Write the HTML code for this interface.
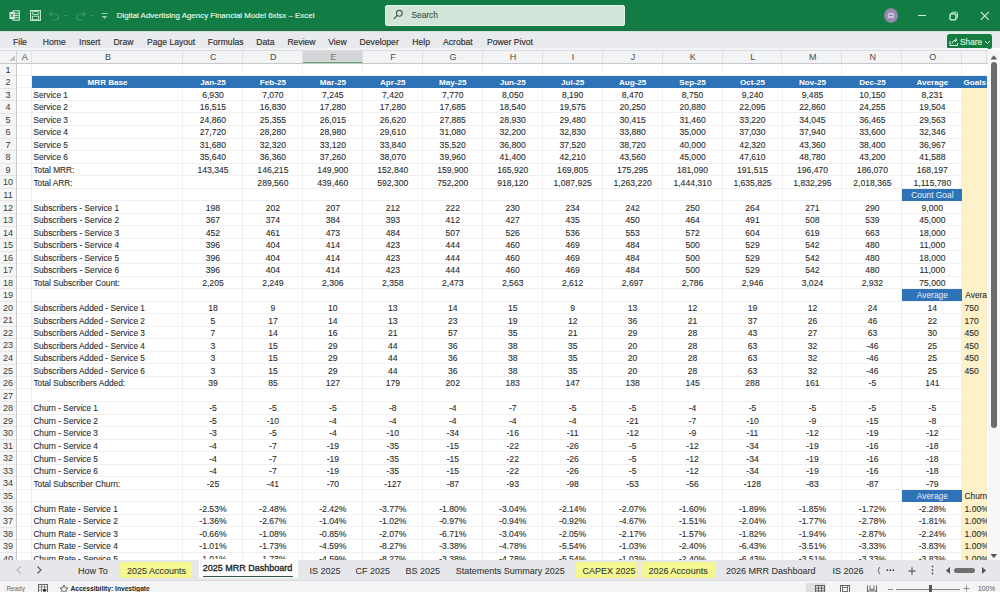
<!DOCTYPE html>
<html><head><meta charset="utf-8"><title>Excel</title>
<style>
*{margin:0;padding:0;box-sizing:border-box}
html,body{width:1000px;height:592px;overflow:hidden;background:#fff}
body{position:relative;font-family:"Liberation Sans",sans-serif;}
.a{position:absolute}
.t{position:absolute;white-space:nowrap;line-height:1}
svg{position:absolute;overflow:visible}
#colh{left:0;top:48px;width:987.5px;height:15.5px;background:#F2F3F4}
.ch{position:absolute;top:2.2px;height:13.2px;font-size:9px;color:#4a4a4a;text-align:center;line-height:14px;padding-left:1.6px;border-right:1px solid #E0E1E3}
#rowh{left:0;top:63.5px;width:16.5px;height:497px;background:#F6F6F7;border-right:1px solid #C9C9CB}
.rn{position:absolute;left:0;width:16px;text-align:center;font-size:9px;color:#3a3a3a;line-height:13.2px;border-bottom:1px solid #E6E6E8}
.gl{position:absolute;background:#F0F0F0}
.c{position:absolute;height:12.55px;line-height:15.5px;font-size:8.6px;color:#262626;-webkit-text-stroke:0.1px #444;white-space:nowrap;overflow:hidden}
.lb{font-size:8.3px;line-height:14.8px;letter-spacing:0}
.r{text-align:right;padding-right:4px}
.l{text-align:left;padding-left:1.2px}
.ctr{text-align:center}
.hb{color:#fff;-webkit-text-stroke:0;font-weight:bold;font-size:8.1px;line-height:14px}
.hn{color:#EAF1FA;-webkit-text-stroke:0;font-size:8.4px;line-height:14.6px}
#tabs{left:0;top:560.2px;width:1000px;height:20px;background:#E6E7EB}
#tabs .t{font-size:9px;color:#333}
#status{left:0;top:580.2px;width:1000px;height:11.8px;background:#F4F4F4;border-top:1px solid #DCDCDE}
</style></head><body>

<div class="a" style="left:0;top:0;width:1000px;height:31px;background:#127C45"></div>
<div class="a" style="left:0;top:27.5px;width:1000px;height:3.5px;background:#1A7344"></div>
<div class="a" style="left:0;top:30.5px;width:1000px;height:1px;background:#9FD4B2;opacity:.5"></div>
<svg style="left:9px;top:10px" width="11" height="11"><rect x="4" y="0.8" width="6.4" height="9.4" fill="#2E8A57" stroke="#CFEBD9" stroke-width="1"/><path d="M4.5 3.4 H10 M4.5 5.5 H10 M4.5 7.6 H10" stroke="#CFEBD9" stroke-width="0.9"/><rect x="0.5" y="2" width="5.2" height="7" fill="#E6F6EB"/><path d="M1.7 3.6 L4.5 7.4 M4.5 3.6 L1.7 7.4" stroke="#2C5E40" stroke-width="0.9"/></svg>
<svg style="left:30px;top:10px" width="11" height="11"><rect x="0.6" y="0.6" width="9.8" height="9.8" fill="none" stroke="#C9EAD4" stroke-width="1.1"/><rect x="2.8" y="1.6" width="5.4" height="2.8" fill="none" stroke="#C9EAD4" stroke-width="0.9"/><rect x="2.4" y="6.2" width="6.2" height="3.6" fill="none" stroke="#C9EAD4" stroke-width="0.9"/></svg>
<svg style="left:48px;top:10px" width="14" height="11"><path d="M2 4 H7.5 A3 3 0 0 1 7.5 10 H4" fill="none" stroke="#3C9664" stroke-width="1.1"/><path d="M4 1.5 L1.5 4 L4 6.5" fill="none" stroke="#3C9664" stroke-width="1.1"/></svg>
<div class="a" style="left:64px;top:15px;width:3px;height:1px;background:#3C9664"></div>
<svg style="left:75px;top:10px" width="14" height="11"><path d="M10 4 H4.5 A3 3 0 0 0 4.5 10 H8" fill="none" stroke="#3C9664" stroke-width="1.1"/><path d="M8 1.5 L10.5 4 L8 6.5" fill="none" stroke="#3C9664" stroke-width="1.1"/></svg>
<div class="a" style="left:91px;top:15px;width:3px;height:1px;background:#3C9664"></div>
<svg style="left:100px;top:11px" width="9" height="9"><path d="M1.5 2.5 H7.5" stroke="#8FCCA6" stroke-width="1"/><path d="M1.5 5 L4.5 8 L7.5 5Z" fill="#8FCCA6"/></svg>
<div class="t" style="left:116.80px;top:12.27px;font-size:7.95px;color:#E2F6E8;font-weight:normal;-webkit-text-stroke:0.2px #D0EEDA">Digital Advertising Agency Financial Model 6xlsx &ndash; Excel</div>
<div class="a" style="left:384.8px;top:5.2px;width:240px;height:20.4px;background:#D3E5D9;border:1px solid #E3F1E8;border-radius:2px"></div>
<svg style="left:392px;top:9px" width="12" height="12"><circle cx="7.3" cy="4.3" r="2.9" fill="none" stroke="#4A5E51" stroke-width="1.1"/><path d="M5.2 6.4 L1.8 10" stroke="#4A5E51" stroke-width="1.2"/></svg>
<div class="t" style="left:411.40px;top:11.29px;font-size:8.4px;color:#34513D;font-weight:normal;-webkit-text-stroke:0.1px #34513D">Search</div>
<div class="a" style="left:883.5px;top:7.8px;width:14.8px;height:14.8px;border-radius:50%;background:radial-gradient(circle,#A49BC0 0,#958CB0 50%,#6E7A74 85%,#4F7C62 100%)"></div>
<div class="a" style="left:887.6px;top:12.5px;width:6.5px;height:5.5px;background:#C9C2E2;border-radius:1px"></div>
<div class="a" style="left:889px;top:14.6px;width:4px;height:1.2px;background:#8A80A8"></div>
<div class="a" style="left:917.6px;top:14.8px;width:8.6px;height:1.1px;background:#D6F0DF"></div>
<svg style="left:949px;top:11px" width="10" height="10"><rect x="2.5" y="1.2" width="6" height="6" rx="1" fill="none" stroke="#BFE6CC" stroke-width="1"/><rect x="1" y="2.8" width="6" height="6" rx="1" fill="#127C45" stroke="#DDF3E4" stroke-width="1.3"/></svg>
<svg style="left:980px;top:10.5px" width="10" height="10"><path d="M0.8 0.8 L8.8 8.8 M8.8 0.8 L0.8 8.8" stroke="#D6F0DF" stroke-width="1.1"/></svg>
<div class="a" style="left:0;top:31.5px;width:1000px;height:16.5px;background:#E9EAEE"></div>
<div class="t" style="left:13.00px;top:38.02px;font-size:8.6px;color:#2e2e2e;font-weight:normal;-webkit-text-stroke:0.15px #333">File</div>
<div class="t" style="left:42.80px;top:38.02px;font-size:8.6px;color:#2e2e2e;font-weight:normal;-webkit-text-stroke:0.15px #333">Home</div>
<div class="t" style="left:79.00px;top:38.02px;font-size:8.6px;color:#2e2e2e;font-weight:normal;-webkit-text-stroke:0.15px #333">Insert</div>
<div class="t" style="left:113.40px;top:38.02px;font-size:8.6px;color:#2e2e2e;font-weight:normal;-webkit-text-stroke:0.15px #333">Draw</div>
<div class="t" style="left:147.00px;top:38.02px;font-size:8.6px;color:#2e2e2e;font-weight:normal;-webkit-text-stroke:0.15px #333">Page Layout</div>
<div class="t" style="left:207.80px;top:38.02px;font-size:8.6px;color:#2e2e2e;font-weight:normal;-webkit-text-stroke:0.15px #333">Formulas</div>
<div class="t" style="left:256.30px;top:38.02px;font-size:8.6px;color:#2e2e2e;font-weight:normal;-webkit-text-stroke:0.15px #333">Data</div>
<div class="t" style="left:287.40px;top:38.02px;font-size:8.6px;color:#2e2e2e;font-weight:normal;-webkit-text-stroke:0.15px #333">Review</div>
<div class="t" style="left:328.30px;top:38.02px;font-size:8.6px;color:#2e2e2e;font-weight:normal;-webkit-text-stroke:0.15px #333">View</div>
<div class="t" style="left:359.60px;top:38.02px;font-size:8.6px;color:#2e2e2e;font-weight:normal;-webkit-text-stroke:0.15px #333">Developer</div>
<div class="t" style="left:412.30px;top:38.02px;font-size:8.6px;color:#2e2e2e;font-weight:normal;-webkit-text-stroke:0.15px #333">Help</div>
<div class="t" style="left:443.00px;top:38.02px;font-size:8.6px;color:#2e2e2e;font-weight:normal;-webkit-text-stroke:0.15px #333">Acrobat</div>
<div class="t" style="left:487.00px;top:38.02px;font-size:8.6px;color:#2e2e2e;font-weight:normal;-webkit-text-stroke:0.15px #333">Power Pivot</div>
<div class="a" style="left:946.5px;top:33.6px;width:45.8px;height:15.1px;background:#157D42;border-radius:2.5px"></div>
<svg style="left:949px;top:37px" width="10" height="10"><path d="M1 4 V8.5 H8.5 V6" fill="none" stroke="#D9F2E1" stroke-width="1"/><path d="M3 6.5 Q3.5 3 7.5 3 M6 1.3 L8 3 L6 4.8" fill="none" stroke="#D9F2E1" stroke-width="1"/></svg>
<div class="t" style="left:960.00px;top:38.17px;font-size:8.3px;color:#D2F2DC;font-weight:normal;-webkit-text-stroke:0.2px #CFEFD9">Share</div>
<svg style="left:984px;top:39.5px" width="7" height="5"><path d="M1 1 L3.5 3.5 L6 1" fill="none" stroke="#D9F2E1" stroke-width="1"/></svg>
<div class="a" style="left:16.5px;top:63.5px;width:971px;height:497px;background:#fff"></div>
<div class="gl" style="left:16.5px;top:74.80px;width:971px;height:1px"></div>
<div class="gl" style="left:16.5px;top:87.34px;width:971px;height:1px"></div>
<div class="gl" style="left:16.5px;top:99.89px;width:971px;height:1px"></div>
<div class="gl" style="left:16.5px;top:112.43px;width:971px;height:1px"></div>
<div class="gl" style="left:16.5px;top:124.98px;width:971px;height:1px"></div>
<div class="gl" style="left:16.5px;top:137.52px;width:971px;height:1px"></div>
<div class="gl" style="left:16.5px;top:150.06px;width:971px;height:1px"></div>
<div class="gl" style="left:16.5px;top:162.61px;width:971px;height:1px"></div>
<div class="gl" style="left:16.5px;top:175.16px;width:971px;height:1px"></div>
<div class="gl" style="left:16.5px;top:187.70px;width:971px;height:1px"></div>
<div class="gl" style="left:16.5px;top:200.24px;width:971px;height:1px"></div>
<div class="gl" style="left:16.5px;top:212.79px;width:971px;height:1px"></div>
<div class="gl" style="left:16.5px;top:225.33px;width:971px;height:1px"></div>
<div class="gl" style="left:16.5px;top:237.88px;width:971px;height:1px"></div>
<div class="gl" style="left:16.5px;top:250.42px;width:971px;height:1px"></div>
<div class="gl" style="left:16.5px;top:262.97px;width:971px;height:1px"></div>
<div class="gl" style="left:16.5px;top:275.52px;width:971px;height:1px"></div>
<div class="gl" style="left:16.5px;top:288.06px;width:971px;height:1px"></div>
<div class="gl" style="left:16.5px;top:300.61px;width:971px;height:1px"></div>
<div class="gl" style="left:16.5px;top:313.15px;width:971px;height:1px"></div>
<div class="gl" style="left:16.5px;top:325.69px;width:971px;height:1px"></div>
<div class="gl" style="left:16.5px;top:338.24px;width:971px;height:1px"></div>
<div class="gl" style="left:16.5px;top:350.79px;width:971px;height:1px"></div>
<div class="gl" style="left:16.5px;top:363.33px;width:971px;height:1px"></div>
<div class="gl" style="left:16.5px;top:375.88px;width:971px;height:1px"></div>
<div class="gl" style="left:16.5px;top:388.42px;width:971px;height:1px"></div>
<div class="gl" style="left:16.5px;top:400.97px;width:971px;height:1px"></div>
<div class="gl" style="left:16.5px;top:413.51px;width:971px;height:1px"></div>
<div class="gl" style="left:16.5px;top:426.06px;width:971px;height:1px"></div>
<div class="gl" style="left:16.5px;top:438.60px;width:971px;height:1px"></div>
<div class="gl" style="left:16.5px;top:451.15px;width:971px;height:1px"></div>
<div class="gl" style="left:16.5px;top:463.69px;width:971px;height:1px"></div>
<div class="gl" style="left:16.5px;top:476.24px;width:971px;height:1px"></div>
<div class="gl" style="left:16.5px;top:488.78px;width:971px;height:1px"></div>
<div class="gl" style="left:16.5px;top:501.32px;width:971px;height:1px"></div>
<div class="gl" style="left:16.5px;top:513.87px;width:971px;height:1px"></div>
<div class="gl" style="left:16.5px;top:526.41px;width:971px;height:1px"></div>
<div class="gl" style="left:16.5px;top:538.96px;width:971px;height:1px"></div>
<div class="gl" style="left:16.5px;top:551.50px;width:971px;height:1px"></div>
<div class="gl" style="left:31.20px;top:63.5px;width:1px;height:497px"></div>
<div class="gl" style="left:182.00px;top:63.5px;width:1px;height:497px"></div>
<div class="gl" style="left:241.95px;top:63.5px;width:1px;height:497px"></div>
<div class="gl" style="left:301.90px;top:63.5px;width:1px;height:497px"></div>
<div class="gl" style="left:361.85px;top:63.5px;width:1px;height:497px"></div>
<div class="gl" style="left:421.80px;top:63.5px;width:1px;height:497px"></div>
<div class="gl" style="left:481.75px;top:63.5px;width:1px;height:497px"></div>
<div class="gl" style="left:541.70px;top:63.5px;width:1px;height:497px"></div>
<div class="gl" style="left:601.65px;top:63.5px;width:1px;height:497px"></div>
<div class="gl" style="left:661.60px;top:63.5px;width:1px;height:497px"></div>
<div class="gl" style="left:721.55px;top:63.5px;width:1px;height:497px"></div>
<div class="gl" style="left:781.50px;top:63.5px;width:1px;height:497px"></div>
<div class="gl" style="left:841.45px;top:63.5px;width:1px;height:497px"></div>
<div class="gl" style="left:901.40px;top:63.5px;width:1px;height:497px"></div>
<div class="gl" style="left:961.35px;top:63.5px;width:1px;height:497px"></div>
<div id="colh" class="a">
<div class="ch" style="left:16.50px;width:15.70px;">A</div>
<div class="ch" style="left:32.20px;width:150.80px;">B</div>
<div class="ch" style="left:183.00px;width:59.95px;">C</div>
<div class="ch" style="left:242.95px;width:59.95px;">D</div>
<div class="ch" style="left:302.90px;width:59.95px;background:#D4D5D6;border-bottom:1.8px solid #5DA677;color:#777;">E</div>
<div class="ch" style="left:362.85px;width:59.95px;">F</div>
<div class="ch" style="left:422.80px;width:59.95px;">G</div>
<div class="ch" style="left:482.75px;width:59.95px;">H</div>
<div class="ch" style="left:542.70px;width:59.95px;">I</div>
<div class="ch" style="left:602.65px;width:59.95px;">J</div>
<div class="ch" style="left:662.60px;width:59.95px;">K</div>
<div class="ch" style="left:722.55px;width:59.95px;">L</div>
<div class="ch" style="left:782.50px;width:59.95px;">M</div>
<div class="ch" style="left:842.45px;width:59.95px;">N</div>
<div class="ch" style="left:902.40px;width:59.95px;">O</div>
<div class="ch" style="left:962.35px;width:25.15px;"></div>
</div>
<svg style="left:7px;top:53px" width="9" height="9"><path d="M8 2 V8 H2Z" fill="#C4C5C7"/></svg>
<div class="a" style="left:16px;top:50px;width:1px;height:13.5px;background:#D0D1D3"></div>
<div class="a" style="left:0;top:62.9px;width:987.5px;height:0.7px;background:#C6C7C9"></div>
<div class="a" style="left:0;top:50.2px;width:987.5px;height:0.8px;background:#DCDDE0"></div>
<div id="rowh" class="a">
<div class="rn" style="top:0.00px;height:12.54px">1</div>
<div class="rn" style="top:12.54px;height:12.54px">2</div>
<div class="rn" style="top:25.09px;height:12.54px">3</div>
<div class="rn" style="top:37.63px;height:12.54px">4</div>
<div class="rn" style="top:50.18px;height:12.54px">5</div>
<div class="rn" style="top:62.73px;height:12.54px">6</div>
<div class="rn" style="top:75.27px;height:12.54px">7</div>
<div class="rn" style="top:87.81px;height:12.54px">8</div>
<div class="rn" style="top:100.36px;height:12.54px">9</div>
<div class="rn" style="top:112.91px;height:12.54px">10</div>
<div class="rn" style="top:125.45px;height:12.54px">11</div>
<div class="rn" style="top:138.00px;height:12.54px">12</div>
<div class="rn" style="top:150.54px;height:12.54px">13</div>
<div class="rn" style="top:163.09px;height:12.54px">14</div>
<div class="rn" style="top:175.63px;height:12.54px">15</div>
<div class="rn" style="top:188.18px;height:12.54px">16</div>
<div class="rn" style="top:200.72px;height:12.54px">17</div>
<div class="rn" style="top:213.26px;height:12.54px">18</div>
<div class="rn" style="top:225.81px;height:12.54px">19</div>
<div class="rn" style="top:238.35px;height:12.54px">20</div>
<div class="rn" style="top:250.90px;height:12.54px">21</div>
<div class="rn" style="top:263.44px;height:12.54px">22</div>
<div class="rn" style="top:275.99px;height:12.54px">23</div>
<div class="rn" style="top:288.54px;height:12.54px">24</div>
<div class="rn" style="top:301.08px;height:12.54px">25</div>
<div class="rn" style="top:313.62px;height:12.54px">26</div>
<div class="rn" style="top:326.17px;height:12.54px">27</div>
<div class="rn" style="top:338.71px;height:12.54px">28</div>
<div class="rn" style="top:351.26px;height:12.54px">29</div>
<div class="rn" style="top:363.81px;height:12.54px">30</div>
<div class="rn" style="top:376.35px;height:12.54px">31</div>
<div class="rn" style="top:388.89px;height:12.54px">32</div>
<div class="rn" style="top:401.44px;height:12.54px">33</div>
<div class="rn" style="top:413.99px;height:12.54px">34</div>
<div class="rn" style="top:426.53px;height:12.54px">35</div>
<div class="rn" style="top:439.07px;height:12.54px">36</div>
<div class="rn" style="top:451.62px;height:12.54px">37</div>
<div class="rn" style="top:464.17px;height:12.54px">38</div>
<div class="rn" style="top:476.71px;height:12.54px">39</div>
<div class="rn" style="top:489.25px;height:12.54px">40</div>
</div>
<div class="a" style="left:962.35px;top:88.34px;width:25.15px;height:471.86px;background:#FDF1CA"></div>
<div class="a" style="left:32.20px;top:75.80px;width:955.30px;height:11.95px;background:#2E72B8"></div>
<div class="c ctr hb" style="left:32.20px;top:76px;width:150.80px;">MRR Base</div>
<div class="c ctr hb" style="left:183.00px;top:76px;width:59.95px;">Jan-25</div>
<div class="c ctr hb" style="left:242.95px;top:76px;width:59.95px;">Feb-25</div>
<div class="c ctr hb" style="left:302.90px;top:76px;width:59.95px;">Mar-25</div>
<div class="c ctr hb" style="left:362.85px;top:76px;width:59.95px;">Apr-25</div>
<div class="c ctr hb" style="left:422.80px;top:76px;width:59.95px;">May-25</div>
<div class="c ctr hb" style="left:482.75px;top:76px;width:59.95px;">Jun-25</div>
<div class="c ctr hb" style="left:542.70px;top:76px;width:59.95px;">Jul-25</div>
<div class="c ctr hb" style="left:602.65px;top:76px;width:59.95px;">Aug-25</div>
<div class="c ctr hb" style="left:662.60px;top:76px;width:59.95px;">Sep-25</div>
<div class="c ctr hb" style="left:722.55px;top:76px;width:59.95px;">Oct-25</div>
<div class="c ctr hb" style="left:782.50px;top:76px;width:59.95px;">Nov-25</div>
<div class="c ctr hb" style="left:842.45px;top:76px;width:59.95px;">Dec-25</div>
<div class="c ctr hb" style="left:902.40px;top:76px;width:59.95px;">Average</div>
<div class="c l hb" style="left:962.35px;top:76px;width:25.15px;overflow:hidden">Goals</div>
<div class="c l lb" style="left:32.20px;top:88px;width:150.80px;">Service 1</div>
<div class="c ctr" style="left:183.00px;top:88px;width:59.95px;">6,930</div>
<div class="c ctr" style="left:242.95px;top:88px;width:59.95px;">7,070</div>
<div class="c ctr" style="left:302.90px;top:88px;width:59.95px;">7,245</div>
<div class="c ctr" style="left:362.85px;top:88px;width:59.95px;">7,420</div>
<div class="c ctr" style="left:422.80px;top:88px;width:59.95px;">7,770</div>
<div class="c ctr" style="left:482.75px;top:88px;width:59.95px;">8,050</div>
<div class="c ctr" style="left:542.70px;top:88px;width:59.95px;">8,190</div>
<div class="c ctr" style="left:602.65px;top:88px;width:59.95px;">8,470</div>
<div class="c ctr" style="left:662.60px;top:88px;width:59.95px;">8,750</div>
<div class="c ctr" style="left:722.55px;top:88px;width:59.95px;">9,240</div>
<div class="c ctr" style="left:782.50px;top:88px;width:59.95px;">9,485</div>
<div class="c ctr" style="left:842.45px;top:88px;width:59.95px;">10,150</div>
<div class="c ctr" style="left:902.40px;top:88px;width:59.95px;">8,231</div>
<div class="c l lb" style="left:32.20px;top:100px;width:150.80px;">Service 2</div>
<div class="c ctr" style="left:183.00px;top:100px;width:59.95px;">16,515</div>
<div class="c ctr" style="left:242.95px;top:100px;width:59.95px;">16,830</div>
<div class="c ctr" style="left:302.90px;top:100px;width:59.95px;">17,280</div>
<div class="c ctr" style="left:362.85px;top:100px;width:59.95px;">17,280</div>
<div class="c ctr" style="left:422.80px;top:100px;width:59.95px;">17,685</div>
<div class="c ctr" style="left:482.75px;top:100px;width:59.95px;">18,540</div>
<div class="c ctr" style="left:542.70px;top:100px;width:59.95px;">19,575</div>
<div class="c ctr" style="left:602.65px;top:100px;width:59.95px;">20,250</div>
<div class="c ctr" style="left:662.60px;top:100px;width:59.95px;">20,880</div>
<div class="c ctr" style="left:722.55px;top:100px;width:59.95px;">22,095</div>
<div class="c ctr" style="left:782.50px;top:100px;width:59.95px;">22,860</div>
<div class="c ctr" style="left:842.45px;top:100px;width:59.95px;">24,255</div>
<div class="c ctr" style="left:902.40px;top:100px;width:59.95px;">19,504</div>
<div class="c l lb" style="left:32.20px;top:113px;width:150.80px;">Service 3</div>
<div class="c ctr" style="left:183.00px;top:113px;width:59.95px;">24,860</div>
<div class="c ctr" style="left:242.95px;top:113px;width:59.95px;">25,355</div>
<div class="c ctr" style="left:302.90px;top:113px;width:59.95px;">26,015</div>
<div class="c ctr" style="left:362.85px;top:113px;width:59.95px;">26,620</div>
<div class="c ctr" style="left:422.80px;top:113px;width:59.95px;">27,885</div>
<div class="c ctr" style="left:482.75px;top:113px;width:59.95px;">28,930</div>
<div class="c ctr" style="left:542.70px;top:113px;width:59.95px;">29,480</div>
<div class="c ctr" style="left:602.65px;top:113px;width:59.95px;">30,415</div>
<div class="c ctr" style="left:662.60px;top:113px;width:59.95px;">31,460</div>
<div class="c ctr" style="left:722.55px;top:113px;width:59.95px;">33,220</div>
<div class="c ctr" style="left:782.50px;top:113px;width:59.95px;">34,045</div>
<div class="c ctr" style="left:842.45px;top:113px;width:59.95px;">36,465</div>
<div class="c ctr" style="left:902.40px;top:113px;width:59.95px;">29,563</div>
<div class="c l lb" style="left:32.20px;top:125px;width:150.80px;">Service 4</div>
<div class="c ctr" style="left:183.00px;top:125px;width:59.95px;">27,720</div>
<div class="c ctr" style="left:242.95px;top:125px;width:59.95px;">28,280</div>
<div class="c ctr" style="left:302.90px;top:125px;width:59.95px;">28,980</div>
<div class="c ctr" style="left:362.85px;top:125px;width:59.95px;">29,610</div>
<div class="c ctr" style="left:422.80px;top:125px;width:59.95px;">31,080</div>
<div class="c ctr" style="left:482.75px;top:125px;width:59.95px;">32,200</div>
<div class="c ctr" style="left:542.70px;top:125px;width:59.95px;">32,830</div>
<div class="c ctr" style="left:602.65px;top:125px;width:59.95px;">33,880</div>
<div class="c ctr" style="left:662.60px;top:125px;width:59.95px;">35,000</div>
<div class="c ctr" style="left:722.55px;top:125px;width:59.95px;">37,030</div>
<div class="c ctr" style="left:782.50px;top:125px;width:59.95px;">37,940</div>
<div class="c ctr" style="left:842.45px;top:125px;width:59.95px;">33,600</div>
<div class="c ctr" style="left:902.40px;top:125px;width:59.95px;">32,346</div>
<div class="c l lb" style="left:32.20px;top:138px;width:150.80px;">Service 5</div>
<div class="c ctr" style="left:183.00px;top:138px;width:59.95px;">31,680</div>
<div class="c ctr" style="left:242.95px;top:138px;width:59.95px;">32,320</div>
<div class="c ctr" style="left:302.90px;top:138px;width:59.95px;">33,120</div>
<div class="c ctr" style="left:362.85px;top:138px;width:59.95px;">33,840</div>
<div class="c ctr" style="left:422.80px;top:138px;width:59.95px;">35,520</div>
<div class="c ctr" style="left:482.75px;top:138px;width:59.95px;">36,800</div>
<div class="c ctr" style="left:542.70px;top:138px;width:59.95px;">37,520</div>
<div class="c ctr" style="left:602.65px;top:138px;width:59.95px;">38,720</div>
<div class="c ctr" style="left:662.60px;top:138px;width:59.95px;">40,000</div>
<div class="c ctr" style="left:722.55px;top:138px;width:59.95px;">42,320</div>
<div class="c ctr" style="left:782.50px;top:138px;width:59.95px;">43,360</div>
<div class="c ctr" style="left:842.45px;top:138px;width:59.95px;">38,400</div>
<div class="c ctr" style="left:902.40px;top:138px;width:59.95px;">36,967</div>
<div class="c l lb" style="left:32.20px;top:150px;width:150.80px;">Service 6</div>
<div class="c ctr" style="left:183.00px;top:150px;width:59.95px;">35,640</div>
<div class="c ctr" style="left:242.95px;top:150px;width:59.95px;">36,360</div>
<div class="c ctr" style="left:302.90px;top:150px;width:59.95px;">37,260</div>
<div class="c ctr" style="left:362.85px;top:150px;width:59.95px;">38,070</div>
<div class="c ctr" style="left:422.80px;top:150px;width:59.95px;">39,960</div>
<div class="c ctr" style="left:482.75px;top:150px;width:59.95px;">41,400</div>
<div class="c ctr" style="left:542.70px;top:150px;width:59.95px;">42,210</div>
<div class="c ctr" style="left:602.65px;top:150px;width:59.95px;">43,560</div>
<div class="c ctr" style="left:662.60px;top:150px;width:59.95px;">45,000</div>
<div class="c ctr" style="left:722.55px;top:150px;width:59.95px;">47,610</div>
<div class="c ctr" style="left:782.50px;top:150px;width:59.95px;">48,780</div>
<div class="c ctr" style="left:842.45px;top:150px;width:59.95px;">43,200</div>
<div class="c ctr" style="left:902.40px;top:150px;width:59.95px;">41,588</div>
<div class="c l lb" style="left:32.20px;top:163px;width:150.80px;">Total MRR:</div>
<div class="c ctr" style="left:183.00px;top:163px;width:59.95px;">143,345</div>
<div class="c ctr" style="left:242.95px;top:163px;width:59.95px;">146,215</div>
<div class="c ctr" style="left:302.90px;top:163px;width:59.95px;">149,900</div>
<div class="c ctr" style="left:362.85px;top:163px;width:59.95px;">152,840</div>
<div class="c ctr" style="left:422.80px;top:163px;width:59.95px;">159,900</div>
<div class="c ctr" style="left:482.75px;top:163px;width:59.95px;">165,920</div>
<div class="c ctr" style="left:542.70px;top:163px;width:59.95px;">169,805</div>
<div class="c ctr" style="left:602.65px;top:163px;width:59.95px;">175,295</div>
<div class="c ctr" style="left:662.60px;top:163px;width:59.95px;">181,090</div>
<div class="c ctr" style="left:722.55px;top:163px;width:59.95px;">191,515</div>
<div class="c ctr" style="left:782.50px;top:163px;width:59.95px;">196,470</div>
<div class="c ctr" style="left:842.45px;top:163px;width:59.95px;">186,070</div>
<div class="c ctr" style="left:902.40px;top:163px;width:59.95px;">168,197</div>
<div class="c l lb" style="left:32.20px;top:176px;width:150.80px;">Total ARR:</div>
<div class="c ctr" style="left:242.95px;top:176px;width:59.95px;">289,560</div>
<div class="c ctr" style="left:302.90px;top:176px;width:59.95px;">439,460</div>
<div class="c ctr" style="left:362.85px;top:176px;width:59.95px;">592,300</div>
<div class="c ctr" style="left:422.80px;top:176px;width:59.95px;">752,200</div>
<div class="c ctr" style="left:482.75px;top:176px;width:59.95px;">918,120</div>
<div class="c ctr" style="left:542.70px;top:176px;width:59.95px;">1,087,925</div>
<div class="c ctr" style="left:602.65px;top:176px;width:59.95px;">1,263,220</div>
<div class="c ctr" style="left:662.60px;top:176px;width:59.95px;">1,444,310</div>
<div class="c ctr" style="left:722.55px;top:176px;width:59.95px;">1,635,825</div>
<div class="c ctr" style="left:782.50px;top:176px;width:59.95px;">1,832,295</div>
<div class="c ctr" style="left:842.45px;top:176px;width:59.95px;">2,018,365</div>
<div class="c ctr" style="left:902.40px;top:176px;width:59.95px;">1,115,780</div>
<div class="c l lb" style="left:32.20px;top:201px;width:150.80px;">Subscribers - Service 1</div>
<div class="c ctr" style="left:183.00px;top:201px;width:59.95px;">198</div>
<div class="c ctr" style="left:242.95px;top:201px;width:59.95px;">202</div>
<div class="c ctr" style="left:302.90px;top:201px;width:59.95px;">207</div>
<div class="c ctr" style="left:362.85px;top:201px;width:59.95px;">212</div>
<div class="c ctr" style="left:422.80px;top:201px;width:59.95px;">222</div>
<div class="c ctr" style="left:482.75px;top:201px;width:59.95px;">230</div>
<div class="c ctr" style="left:542.70px;top:201px;width:59.95px;">234</div>
<div class="c ctr" style="left:602.65px;top:201px;width:59.95px;">242</div>
<div class="c ctr" style="left:662.60px;top:201px;width:59.95px;">250</div>
<div class="c ctr" style="left:722.55px;top:201px;width:59.95px;">264</div>
<div class="c ctr" style="left:782.50px;top:201px;width:59.95px;">271</div>
<div class="c ctr" style="left:842.45px;top:201px;width:59.95px;">290</div>
<div class="c ctr" style="left:902.40px;top:201px;width:59.95px;">9,000</div>
<div class="c l lb" style="left:32.20px;top:213px;width:150.80px;">Subscribers - Service 2</div>
<div class="c ctr" style="left:183.00px;top:213px;width:59.95px;">367</div>
<div class="c ctr" style="left:242.95px;top:213px;width:59.95px;">374</div>
<div class="c ctr" style="left:302.90px;top:213px;width:59.95px;">384</div>
<div class="c ctr" style="left:362.85px;top:213px;width:59.95px;">393</div>
<div class="c ctr" style="left:422.80px;top:213px;width:59.95px;">412</div>
<div class="c ctr" style="left:482.75px;top:213px;width:59.95px;">427</div>
<div class="c ctr" style="left:542.70px;top:213px;width:59.95px;">435</div>
<div class="c ctr" style="left:602.65px;top:213px;width:59.95px;">450</div>
<div class="c ctr" style="left:662.60px;top:213px;width:59.95px;">464</div>
<div class="c ctr" style="left:722.55px;top:213px;width:59.95px;">491</div>
<div class="c ctr" style="left:782.50px;top:213px;width:59.95px;">508</div>
<div class="c ctr" style="left:842.45px;top:213px;width:59.95px;">539</div>
<div class="c ctr" style="left:902.40px;top:213px;width:59.95px;">45,000</div>
<div class="c l lb" style="left:32.20px;top:226px;width:150.80px;">Subscribers - Service 3</div>
<div class="c ctr" style="left:183.00px;top:226px;width:59.95px;">452</div>
<div class="c ctr" style="left:242.95px;top:226px;width:59.95px;">461</div>
<div class="c ctr" style="left:302.90px;top:226px;width:59.95px;">473</div>
<div class="c ctr" style="left:362.85px;top:226px;width:59.95px;">484</div>
<div class="c ctr" style="left:422.80px;top:226px;width:59.95px;">507</div>
<div class="c ctr" style="left:482.75px;top:226px;width:59.95px;">526</div>
<div class="c ctr" style="left:542.70px;top:226px;width:59.95px;">536</div>
<div class="c ctr" style="left:602.65px;top:226px;width:59.95px;">553</div>
<div class="c ctr" style="left:662.60px;top:226px;width:59.95px;">572</div>
<div class="c ctr" style="left:722.55px;top:226px;width:59.95px;">604</div>
<div class="c ctr" style="left:782.50px;top:226px;width:59.95px;">619</div>
<div class="c ctr" style="left:842.45px;top:226px;width:59.95px;">663</div>
<div class="c ctr" style="left:902.40px;top:226px;width:59.95px;">18,000</div>
<div class="c l lb" style="left:32.20px;top:238px;width:150.80px;">Subscribers - Service 4</div>
<div class="c ctr" style="left:183.00px;top:238px;width:59.95px;">396</div>
<div class="c ctr" style="left:242.95px;top:238px;width:59.95px;">404</div>
<div class="c ctr" style="left:302.90px;top:238px;width:59.95px;">414</div>
<div class="c ctr" style="left:362.85px;top:238px;width:59.95px;">423</div>
<div class="c ctr" style="left:422.80px;top:238px;width:59.95px;">444</div>
<div class="c ctr" style="left:482.75px;top:238px;width:59.95px;">460</div>
<div class="c ctr" style="left:542.70px;top:238px;width:59.95px;">469</div>
<div class="c ctr" style="left:602.65px;top:238px;width:59.95px;">484</div>
<div class="c ctr" style="left:662.60px;top:238px;width:59.95px;">500</div>
<div class="c ctr" style="left:722.55px;top:238px;width:59.95px;">529</div>
<div class="c ctr" style="left:782.50px;top:238px;width:59.95px;">542</div>
<div class="c ctr" style="left:842.45px;top:238px;width:59.95px;">480</div>
<div class="c ctr" style="left:902.40px;top:238px;width:59.95px;">11,000</div>
<div class="c l lb" style="left:32.20px;top:251px;width:150.80px;">Subscribers - Service 5</div>
<div class="c ctr" style="left:183.00px;top:251px;width:59.95px;">396</div>
<div class="c ctr" style="left:242.95px;top:251px;width:59.95px;">404</div>
<div class="c ctr" style="left:302.90px;top:251px;width:59.95px;">414</div>
<div class="c ctr" style="left:362.85px;top:251px;width:59.95px;">423</div>
<div class="c ctr" style="left:422.80px;top:251px;width:59.95px;">444</div>
<div class="c ctr" style="left:482.75px;top:251px;width:59.95px;">460</div>
<div class="c ctr" style="left:542.70px;top:251px;width:59.95px;">469</div>
<div class="c ctr" style="left:602.65px;top:251px;width:59.95px;">484</div>
<div class="c ctr" style="left:662.60px;top:251px;width:59.95px;">500</div>
<div class="c ctr" style="left:722.55px;top:251px;width:59.95px;">529</div>
<div class="c ctr" style="left:782.50px;top:251px;width:59.95px;">542</div>
<div class="c ctr" style="left:842.45px;top:251px;width:59.95px;">480</div>
<div class="c ctr" style="left:902.40px;top:251px;width:59.95px;">18,000</div>
<div class="c l lb" style="left:32.20px;top:263px;width:150.80px;">Subscribers - Service 6</div>
<div class="c ctr" style="left:183.00px;top:263px;width:59.95px;">396</div>
<div class="c ctr" style="left:242.95px;top:263px;width:59.95px;">404</div>
<div class="c ctr" style="left:302.90px;top:263px;width:59.95px;">414</div>
<div class="c ctr" style="left:362.85px;top:263px;width:59.95px;">423</div>
<div class="c ctr" style="left:422.80px;top:263px;width:59.95px;">444</div>
<div class="c ctr" style="left:482.75px;top:263px;width:59.95px;">460</div>
<div class="c ctr" style="left:542.70px;top:263px;width:59.95px;">469</div>
<div class="c ctr" style="left:602.65px;top:263px;width:59.95px;">484</div>
<div class="c ctr" style="left:662.60px;top:263px;width:59.95px;">500</div>
<div class="c ctr" style="left:722.55px;top:263px;width:59.95px;">529</div>
<div class="c ctr" style="left:782.50px;top:263px;width:59.95px;">542</div>
<div class="c ctr" style="left:842.45px;top:263px;width:59.95px;">480</div>
<div class="c ctr" style="left:902.40px;top:263px;width:59.95px;">11,000</div>
<div class="c l lb" style="left:32.20px;top:276px;width:150.80px;">Total Subscriber Count:</div>
<div class="c ctr" style="left:183.00px;top:276px;width:59.95px;">2,205</div>
<div class="c ctr" style="left:242.95px;top:276px;width:59.95px;">2,249</div>
<div class="c ctr" style="left:302.90px;top:276px;width:59.95px;">2,306</div>
<div class="c ctr" style="left:362.85px;top:276px;width:59.95px;">2,358</div>
<div class="c ctr" style="left:422.80px;top:276px;width:59.95px;">2,473</div>
<div class="c ctr" style="left:482.75px;top:276px;width:59.95px;">2,563</div>
<div class="c ctr" style="left:542.70px;top:276px;width:59.95px;">2,612</div>
<div class="c ctr" style="left:602.65px;top:276px;width:59.95px;">2,697</div>
<div class="c ctr" style="left:662.60px;top:276px;width:59.95px;">2,786</div>
<div class="c ctr" style="left:722.55px;top:276px;width:59.95px;">2,946</div>
<div class="c ctr" style="left:782.50px;top:276px;width:59.95px;">3,024</div>
<div class="c ctr" style="left:842.45px;top:276px;width:59.95px;">2,932</div>
<div class="c ctr" style="left:902.40px;top:276px;width:59.95px;">75,000</div>
<div class="c l lb" style="left:32.20px;top:301px;width:150.80px;">Subscribers Added - Service 1</div>
<div class="c ctr" style="left:183.00px;top:301px;width:59.95px;">18</div>
<div class="c ctr" style="left:242.95px;top:301px;width:59.95px;">9</div>
<div class="c ctr" style="left:302.90px;top:301px;width:59.95px;">10</div>
<div class="c ctr" style="left:362.85px;top:301px;width:59.95px;">13</div>
<div class="c ctr" style="left:422.80px;top:301px;width:59.95px;">14</div>
<div class="c ctr" style="left:482.75px;top:301px;width:59.95px;">15</div>
<div class="c ctr" style="left:542.70px;top:301px;width:59.95px;">9</div>
<div class="c ctr" style="left:602.65px;top:301px;width:59.95px;">13</div>
<div class="c ctr" style="left:662.60px;top:301px;width:59.95px;">12</div>
<div class="c ctr" style="left:722.55px;top:301px;width:59.95px;">19</div>
<div class="c ctr" style="left:782.50px;top:301px;width:59.95px;">12</div>
<div class="c ctr" style="left:842.45px;top:301px;width:59.95px;">24</div>
<div class="c ctr" style="left:902.40px;top:301px;width:59.95px;">14</div>
<div class="c l" style="left:962.35px;top:301px;width:25.15px;padding-left:2.2px">750</div>
<div class="c l lb" style="left:32.20px;top:314px;width:150.80px;">Subscribers Added - Service 2</div>
<div class="c ctr" style="left:183.00px;top:314px;width:59.95px;">5</div>
<div class="c ctr" style="left:242.95px;top:314px;width:59.95px;">17</div>
<div class="c ctr" style="left:302.90px;top:314px;width:59.95px;">14</div>
<div class="c ctr" style="left:362.85px;top:314px;width:59.95px;">13</div>
<div class="c ctr" style="left:422.80px;top:314px;width:59.95px;">23</div>
<div class="c ctr" style="left:482.75px;top:314px;width:59.95px;">19</div>
<div class="c ctr" style="left:542.70px;top:314px;width:59.95px;">12</div>
<div class="c ctr" style="left:602.65px;top:314px;width:59.95px;">36</div>
<div class="c ctr" style="left:662.60px;top:314px;width:59.95px;">21</div>
<div class="c ctr" style="left:722.55px;top:314px;width:59.95px;">37</div>
<div class="c ctr" style="left:782.50px;top:314px;width:59.95px;">26</div>
<div class="c ctr" style="left:842.45px;top:314px;width:59.95px;">46</div>
<div class="c ctr" style="left:902.40px;top:314px;width:59.95px;">22</div>
<div class="c l" style="left:962.35px;top:314px;width:25.15px;padding-left:2.2px">170</div>
<div class="c l lb" style="left:32.20px;top:326px;width:150.80px;">Subscribers Added - Service 3</div>
<div class="c ctr" style="left:183.00px;top:326px;width:59.95px;">7</div>
<div class="c ctr" style="left:242.95px;top:326px;width:59.95px;">14</div>
<div class="c ctr" style="left:302.90px;top:326px;width:59.95px;">16</div>
<div class="c ctr" style="left:362.85px;top:326px;width:59.95px;">21</div>
<div class="c ctr" style="left:422.80px;top:326px;width:59.95px;">57</div>
<div class="c ctr" style="left:482.75px;top:326px;width:59.95px;">35</div>
<div class="c ctr" style="left:542.70px;top:326px;width:59.95px;">21</div>
<div class="c ctr" style="left:602.65px;top:326px;width:59.95px;">29</div>
<div class="c ctr" style="left:662.60px;top:326px;width:59.95px;">28</div>
<div class="c ctr" style="left:722.55px;top:326px;width:59.95px;">43</div>
<div class="c ctr" style="left:782.50px;top:326px;width:59.95px;">27</div>
<div class="c ctr" style="left:842.45px;top:326px;width:59.95px;">63</div>
<div class="c ctr" style="left:902.40px;top:326px;width:59.95px;">30</div>
<div class="c l" style="left:962.35px;top:326px;width:25.15px;padding-left:2.2px">450</div>
<div class="c l lb" style="left:32.20px;top:339px;width:150.80px;">Subscribers Added - Service 4</div>
<div class="c ctr" style="left:183.00px;top:339px;width:59.95px;">3</div>
<div class="c ctr" style="left:242.95px;top:339px;width:59.95px;">15</div>
<div class="c ctr" style="left:302.90px;top:339px;width:59.95px;">29</div>
<div class="c ctr" style="left:362.85px;top:339px;width:59.95px;">44</div>
<div class="c ctr" style="left:422.80px;top:339px;width:59.95px;">36</div>
<div class="c ctr" style="left:482.75px;top:339px;width:59.95px;">38</div>
<div class="c ctr" style="left:542.70px;top:339px;width:59.95px;">35</div>
<div class="c ctr" style="left:602.65px;top:339px;width:59.95px;">20</div>
<div class="c ctr" style="left:662.60px;top:339px;width:59.95px;">28</div>
<div class="c ctr" style="left:722.55px;top:339px;width:59.95px;">63</div>
<div class="c ctr" style="left:782.50px;top:339px;width:59.95px;">32</div>
<div class="c ctr" style="left:842.45px;top:339px;width:59.95px;">-46</div>
<div class="c ctr" style="left:902.40px;top:339px;width:59.95px;">25</div>
<div class="c l" style="left:962.35px;top:339px;width:25.15px;padding-left:2.2px">450</div>
<div class="c l lb" style="left:32.20px;top:351px;width:150.80px;">Subscribers Added - Service 5</div>
<div class="c ctr" style="left:183.00px;top:351px;width:59.95px;">3</div>
<div class="c ctr" style="left:242.95px;top:351px;width:59.95px;">15</div>
<div class="c ctr" style="left:302.90px;top:351px;width:59.95px;">29</div>
<div class="c ctr" style="left:362.85px;top:351px;width:59.95px;">44</div>
<div class="c ctr" style="left:422.80px;top:351px;width:59.95px;">36</div>
<div class="c ctr" style="left:482.75px;top:351px;width:59.95px;">38</div>
<div class="c ctr" style="left:542.70px;top:351px;width:59.95px;">35</div>
<div class="c ctr" style="left:602.65px;top:351px;width:59.95px;">20</div>
<div class="c ctr" style="left:662.60px;top:351px;width:59.95px;">28</div>
<div class="c ctr" style="left:722.55px;top:351px;width:59.95px;">63</div>
<div class="c ctr" style="left:782.50px;top:351px;width:59.95px;">32</div>
<div class="c ctr" style="left:842.45px;top:351px;width:59.95px;">-46</div>
<div class="c ctr" style="left:902.40px;top:351px;width:59.95px;">25</div>
<div class="c l" style="left:962.35px;top:351px;width:25.15px;padding-left:2.2px">450</div>
<div class="c l lb" style="left:32.20px;top:364px;width:150.80px;">Subscribers Added - Service 6</div>
<div class="c ctr" style="left:183.00px;top:364px;width:59.95px;">3</div>
<div class="c ctr" style="left:242.95px;top:364px;width:59.95px;">15</div>
<div class="c ctr" style="left:302.90px;top:364px;width:59.95px;">29</div>
<div class="c ctr" style="left:362.85px;top:364px;width:59.95px;">44</div>
<div class="c ctr" style="left:422.80px;top:364px;width:59.95px;">36</div>
<div class="c ctr" style="left:482.75px;top:364px;width:59.95px;">38</div>
<div class="c ctr" style="left:542.70px;top:364px;width:59.95px;">35</div>
<div class="c ctr" style="left:602.65px;top:364px;width:59.95px;">20</div>
<div class="c ctr" style="left:662.60px;top:364px;width:59.95px;">28</div>
<div class="c ctr" style="left:722.55px;top:364px;width:59.95px;">63</div>
<div class="c ctr" style="left:782.50px;top:364px;width:59.95px;">32</div>
<div class="c ctr" style="left:842.45px;top:364px;width:59.95px;">-46</div>
<div class="c ctr" style="left:902.40px;top:364px;width:59.95px;">25</div>
<div class="c l" style="left:962.35px;top:364px;width:25.15px;padding-left:2.2px">450</div>
<div class="c l lb" style="left:32.20px;top:376px;width:150.80px;">Total Subscribers Added:</div>
<div class="c ctr" style="left:183.00px;top:376px;width:59.95px;">39</div>
<div class="c ctr" style="left:242.95px;top:376px;width:59.95px;">85</div>
<div class="c ctr" style="left:302.90px;top:376px;width:59.95px;">127</div>
<div class="c ctr" style="left:362.85px;top:376px;width:59.95px;">179</div>
<div class="c ctr" style="left:422.80px;top:376px;width:59.95px;">202</div>
<div class="c ctr" style="left:482.75px;top:376px;width:59.95px;">183</div>
<div class="c ctr" style="left:542.70px;top:376px;width:59.95px;">147</div>
<div class="c ctr" style="left:602.65px;top:376px;width:59.95px;">138</div>
<div class="c ctr" style="left:662.60px;top:376px;width:59.95px;">145</div>
<div class="c ctr" style="left:722.55px;top:376px;width:59.95px;">288</div>
<div class="c ctr" style="left:782.50px;top:376px;width:59.95px;">161</div>
<div class="c ctr" style="left:842.45px;top:376px;width:59.95px;">-5</div>
<div class="c ctr" style="left:902.40px;top:376px;width:59.95px;">141</div>
<div class="c l lb" style="left:32.20px;top:401px;width:150.80px;">Churn - Service 1</div>
<div class="c ctr" style="left:183.00px;top:401px;width:59.95px;">-5</div>
<div class="c ctr" style="left:242.95px;top:401px;width:59.95px;">-5</div>
<div class="c ctr" style="left:302.90px;top:401px;width:59.95px;">-5</div>
<div class="c ctr" style="left:362.85px;top:401px;width:59.95px;">-8</div>
<div class="c ctr" style="left:422.80px;top:401px;width:59.95px;">-4</div>
<div class="c ctr" style="left:482.75px;top:401px;width:59.95px;">-7</div>
<div class="c ctr" style="left:542.70px;top:401px;width:59.95px;">-5</div>
<div class="c ctr" style="left:602.65px;top:401px;width:59.95px;">-5</div>
<div class="c ctr" style="left:662.60px;top:401px;width:59.95px;">-4</div>
<div class="c ctr" style="left:722.55px;top:401px;width:59.95px;">-5</div>
<div class="c ctr" style="left:782.50px;top:401px;width:59.95px;">-5</div>
<div class="c ctr" style="left:842.45px;top:401px;width:59.95px;">-5</div>
<div class="c ctr" style="left:902.40px;top:401px;width:59.95px;">-5</div>
<div class="c l lb" style="left:32.20px;top:414px;width:150.80px;">Churn - Service 2</div>
<div class="c ctr" style="left:183.00px;top:414px;width:59.95px;">-5</div>
<div class="c ctr" style="left:242.95px;top:414px;width:59.95px;">-10</div>
<div class="c ctr" style="left:302.90px;top:414px;width:59.95px;">-4</div>
<div class="c ctr" style="left:362.85px;top:414px;width:59.95px;">-4</div>
<div class="c ctr" style="left:422.80px;top:414px;width:59.95px;">-4</div>
<div class="c ctr" style="left:482.75px;top:414px;width:59.95px;">-4</div>
<div class="c ctr" style="left:542.70px;top:414px;width:59.95px;">-4</div>
<div class="c ctr" style="left:602.65px;top:414px;width:59.95px;">-21</div>
<div class="c ctr" style="left:662.60px;top:414px;width:59.95px;">-7</div>
<div class="c ctr" style="left:722.55px;top:414px;width:59.95px;">-10</div>
<div class="c ctr" style="left:782.50px;top:414px;width:59.95px;">-9</div>
<div class="c ctr" style="left:842.45px;top:414px;width:59.95px;">-15</div>
<div class="c ctr" style="left:902.40px;top:414px;width:59.95px;">-8</div>
<div class="c l lb" style="left:32.20px;top:426px;width:150.80px;">Churn - Service 3</div>
<div class="c ctr" style="left:183.00px;top:426px;width:59.95px;">-3</div>
<div class="c ctr" style="left:242.95px;top:426px;width:59.95px;">-5</div>
<div class="c ctr" style="left:302.90px;top:426px;width:59.95px;">-4</div>
<div class="c ctr" style="left:362.85px;top:426px;width:59.95px;">-10</div>
<div class="c ctr" style="left:422.80px;top:426px;width:59.95px;">-34</div>
<div class="c ctr" style="left:482.75px;top:426px;width:59.95px;">-16</div>
<div class="c ctr" style="left:542.70px;top:426px;width:59.95px;">-11</div>
<div class="c ctr" style="left:602.65px;top:426px;width:59.95px;">-12</div>
<div class="c ctr" style="left:662.60px;top:426px;width:59.95px;">-9</div>
<div class="c ctr" style="left:722.55px;top:426px;width:59.95px;">-11</div>
<div class="c ctr" style="left:782.50px;top:426px;width:59.95px;">-12</div>
<div class="c ctr" style="left:842.45px;top:426px;width:59.95px;">-19</div>
<div class="c ctr" style="left:902.40px;top:426px;width:59.95px;">-12</div>
<div class="c l lb" style="left:32.20px;top:439px;width:150.80px;">Churn - Service 4</div>
<div class="c ctr" style="left:183.00px;top:439px;width:59.95px;">-4</div>
<div class="c ctr" style="left:242.95px;top:439px;width:59.95px;">-7</div>
<div class="c ctr" style="left:302.90px;top:439px;width:59.95px;">-19</div>
<div class="c ctr" style="left:362.85px;top:439px;width:59.95px;">-35</div>
<div class="c ctr" style="left:422.80px;top:439px;width:59.95px;">-15</div>
<div class="c ctr" style="left:482.75px;top:439px;width:59.95px;">-22</div>
<div class="c ctr" style="left:542.70px;top:439px;width:59.95px;">-26</div>
<div class="c ctr" style="left:602.65px;top:439px;width:59.95px;">-5</div>
<div class="c ctr" style="left:662.60px;top:439px;width:59.95px;">-12</div>
<div class="c ctr" style="left:722.55px;top:439px;width:59.95px;">-34</div>
<div class="c ctr" style="left:782.50px;top:439px;width:59.95px;">-19</div>
<div class="c ctr" style="left:842.45px;top:439px;width:59.95px;">-16</div>
<div class="c ctr" style="left:902.40px;top:439px;width:59.95px;">-18</div>
<div class="c l lb" style="left:32.20px;top:452px;width:150.80px;">Churn - Service 5</div>
<div class="c ctr" style="left:183.00px;top:452px;width:59.95px;">-4</div>
<div class="c ctr" style="left:242.95px;top:452px;width:59.95px;">-7</div>
<div class="c ctr" style="left:302.90px;top:452px;width:59.95px;">-19</div>
<div class="c ctr" style="left:362.85px;top:452px;width:59.95px;">-35</div>
<div class="c ctr" style="left:422.80px;top:452px;width:59.95px;">-15</div>
<div class="c ctr" style="left:482.75px;top:452px;width:59.95px;">-22</div>
<div class="c ctr" style="left:542.70px;top:452px;width:59.95px;">-26</div>
<div class="c ctr" style="left:602.65px;top:452px;width:59.95px;">-5</div>
<div class="c ctr" style="left:662.60px;top:452px;width:59.95px;">-12</div>
<div class="c ctr" style="left:722.55px;top:452px;width:59.95px;">-34</div>
<div class="c ctr" style="left:782.50px;top:452px;width:59.95px;">-19</div>
<div class="c ctr" style="left:842.45px;top:452px;width:59.95px;">-16</div>
<div class="c ctr" style="left:902.40px;top:452px;width:59.95px;">-18</div>
<div class="c l lb" style="left:32.20px;top:464px;width:150.80px;">Churn - Service 6</div>
<div class="c ctr" style="left:183.00px;top:464px;width:59.95px;">-4</div>
<div class="c ctr" style="left:242.95px;top:464px;width:59.95px;">-7</div>
<div class="c ctr" style="left:302.90px;top:464px;width:59.95px;">-19</div>
<div class="c ctr" style="left:362.85px;top:464px;width:59.95px;">-35</div>
<div class="c ctr" style="left:422.80px;top:464px;width:59.95px;">-15</div>
<div class="c ctr" style="left:482.75px;top:464px;width:59.95px;">-22</div>
<div class="c ctr" style="left:542.70px;top:464px;width:59.95px;">-26</div>
<div class="c ctr" style="left:602.65px;top:464px;width:59.95px;">-5</div>
<div class="c ctr" style="left:662.60px;top:464px;width:59.95px;">-12</div>
<div class="c ctr" style="left:722.55px;top:464px;width:59.95px;">-34</div>
<div class="c ctr" style="left:782.50px;top:464px;width:59.95px;">-19</div>
<div class="c ctr" style="left:842.45px;top:464px;width:59.95px;">-16</div>
<div class="c ctr" style="left:902.40px;top:464px;width:59.95px;">-18</div>
<div class="c l lb" style="left:32.20px;top:477px;width:150.80px;">Total Subscriber Churn:</div>
<div class="c ctr" style="left:183.00px;top:477px;width:59.95px;">-25</div>
<div class="c ctr" style="left:242.95px;top:477px;width:59.95px;">-41</div>
<div class="c ctr" style="left:302.90px;top:477px;width:59.95px;">-70</div>
<div class="c ctr" style="left:362.85px;top:477px;width:59.95px;">-127</div>
<div class="c ctr" style="left:422.80px;top:477px;width:59.95px;">-87</div>
<div class="c ctr" style="left:482.75px;top:477px;width:59.95px;">-93</div>
<div class="c ctr" style="left:542.70px;top:477px;width:59.95px;">-98</div>
<div class="c ctr" style="left:602.65px;top:477px;width:59.95px;">-53</div>
<div class="c ctr" style="left:662.60px;top:477px;width:59.95px;">-56</div>
<div class="c ctr" style="left:722.55px;top:477px;width:59.95px;">-128</div>
<div class="c ctr" style="left:782.50px;top:477px;width:59.95px;">-83</div>
<div class="c ctr" style="left:842.45px;top:477px;width:59.95px;">-87</div>
<div class="c ctr" style="left:902.40px;top:477px;width:59.95px;">-79</div>
<div class="c l lb" style="left:32.20px;top:502px;width:150.80px;">Churn Rate - Service 1</div>
<div class="c ctr" style="left:183.00px;top:502px;width:59.95px;">-2.53%</div>
<div class="c ctr" style="left:242.95px;top:502px;width:59.95px;">-2.48%</div>
<div class="c ctr" style="left:302.90px;top:502px;width:59.95px;">-2.42%</div>
<div class="c ctr" style="left:362.85px;top:502px;width:59.95px;">-3.77%</div>
<div class="c ctr" style="left:422.80px;top:502px;width:59.95px;">-1.80%</div>
<div class="c ctr" style="left:482.75px;top:502px;width:59.95px;">-3.04%</div>
<div class="c ctr" style="left:542.70px;top:502px;width:59.95px;">-2.14%</div>
<div class="c ctr" style="left:602.65px;top:502px;width:59.95px;">-2.07%</div>
<div class="c ctr" style="left:662.60px;top:502px;width:59.95px;">-1.60%</div>
<div class="c ctr" style="left:722.55px;top:502px;width:59.95px;">-1.89%</div>
<div class="c ctr" style="left:782.50px;top:502px;width:59.95px;">-1.85%</div>
<div class="c ctr" style="left:842.45px;top:502px;width:59.95px;">-1.72%</div>
<div class="c ctr" style="left:902.40px;top:502px;width:59.95px;">-2.28%</div>
<div class="c l" style="left:962.35px;top:502px;width:25.15px;padding-left:2.2px">1.00%</div>
<div class="c l lb" style="left:32.20px;top:514px;width:150.80px;">Churn Rate - Service 2</div>
<div class="c ctr" style="left:183.00px;top:514px;width:59.95px;">-1.36%</div>
<div class="c ctr" style="left:242.95px;top:514px;width:59.95px;">-2.67%</div>
<div class="c ctr" style="left:302.90px;top:514px;width:59.95px;">-1.04%</div>
<div class="c ctr" style="left:362.85px;top:514px;width:59.95px;">-1.02%</div>
<div class="c ctr" style="left:422.80px;top:514px;width:59.95px;">-0.97%</div>
<div class="c ctr" style="left:482.75px;top:514px;width:59.95px;">-0.94%</div>
<div class="c ctr" style="left:542.70px;top:514px;width:59.95px;">-0.92%</div>
<div class="c ctr" style="left:602.65px;top:514px;width:59.95px;">-4.67%</div>
<div class="c ctr" style="left:662.60px;top:514px;width:59.95px;">-1.51%</div>
<div class="c ctr" style="left:722.55px;top:514px;width:59.95px;">-2.04%</div>
<div class="c ctr" style="left:782.50px;top:514px;width:59.95px;">-1.77%</div>
<div class="c ctr" style="left:842.45px;top:514px;width:59.95px;">-2.78%</div>
<div class="c ctr" style="left:902.40px;top:514px;width:59.95px;">-1.81%</div>
<div class="c l" style="left:962.35px;top:514px;width:25.15px;padding-left:2.2px">1.00%</div>
<div class="c l lb" style="left:32.20px;top:527px;width:150.80px;">Churn Rate - Service 3</div>
<div class="c ctr" style="left:183.00px;top:527px;width:59.95px;">-0.66%</div>
<div class="c ctr" style="left:242.95px;top:527px;width:59.95px;">-1.08%</div>
<div class="c ctr" style="left:302.90px;top:527px;width:59.95px;">-0.85%</div>
<div class="c ctr" style="left:362.85px;top:527px;width:59.95px;">-2.07%</div>
<div class="c ctr" style="left:422.80px;top:527px;width:59.95px;">-6.71%</div>
<div class="c ctr" style="left:482.75px;top:527px;width:59.95px;">-3.04%</div>
<div class="c ctr" style="left:542.70px;top:527px;width:59.95px;">-2.05%</div>
<div class="c ctr" style="left:602.65px;top:527px;width:59.95px;">-2.17%</div>
<div class="c ctr" style="left:662.60px;top:527px;width:59.95px;">-1.57%</div>
<div class="c ctr" style="left:722.55px;top:527px;width:59.95px;">-1.82%</div>
<div class="c ctr" style="left:782.50px;top:527px;width:59.95px;">-1.94%</div>
<div class="c ctr" style="left:842.45px;top:527px;width:59.95px;">-2.87%</div>
<div class="c ctr" style="left:902.40px;top:527px;width:59.95px;">-2.24%</div>
<div class="c l" style="left:962.35px;top:527px;width:25.15px;padding-left:2.2px">1.00%</div>
<div class="c l lb" style="left:32.20px;top:539px;width:150.80px;">Churn Rate - Service 4</div>
<div class="c ctr" style="left:183.00px;top:539px;width:59.95px;">-1.01%</div>
<div class="c ctr" style="left:242.95px;top:539px;width:59.95px;">-1.73%</div>
<div class="c ctr" style="left:302.90px;top:539px;width:59.95px;">-4.59%</div>
<div class="c ctr" style="left:362.85px;top:539px;width:59.95px;">-8.27%</div>
<div class="c ctr" style="left:422.80px;top:539px;width:59.95px;">-3.38%</div>
<div class="c ctr" style="left:482.75px;top:539px;width:59.95px;">-4.78%</div>
<div class="c ctr" style="left:542.70px;top:539px;width:59.95px;">-5.54%</div>
<div class="c ctr" style="left:602.65px;top:539px;width:59.95px;">-1.03%</div>
<div class="c ctr" style="left:662.60px;top:539px;width:59.95px;">-2.40%</div>
<div class="c ctr" style="left:722.55px;top:539px;width:59.95px;">-6.43%</div>
<div class="c ctr" style="left:782.50px;top:539px;width:59.95px;">-3.51%</div>
<div class="c ctr" style="left:842.45px;top:539px;width:59.95px;">-3.33%</div>
<div class="c ctr" style="left:902.40px;top:539px;width:59.95px;">-3.83%</div>
<div class="c l" style="left:962.35px;top:539px;width:25.15px;padding-left:2.2px">1.00%</div>
<div class="c l lb" style="left:32.20px;top:552px;width:150.80px;">Churn Rate - Service 5</div>
<div class="c ctr" style="left:183.00px;top:552px;width:59.95px;">-1.01%</div>
<div class="c ctr" style="left:242.95px;top:552px;width:59.95px;">-1.73%</div>
<div class="c ctr" style="left:302.90px;top:552px;width:59.95px;">-4.59%</div>
<div class="c ctr" style="left:362.85px;top:552px;width:59.95px;">-8.27%</div>
<div class="c ctr" style="left:422.80px;top:552px;width:59.95px;">-3.38%</div>
<div class="c ctr" style="left:482.75px;top:552px;width:59.95px;">-4.78%</div>
<div class="c ctr" style="left:542.70px;top:552px;width:59.95px;">-5.54%</div>
<div class="c ctr" style="left:602.65px;top:552px;width:59.95px;">-1.03%</div>
<div class="c ctr" style="left:662.60px;top:552px;width:59.95px;">-2.40%</div>
<div class="c ctr" style="left:722.55px;top:552px;width:59.95px;">-6.43%</div>
<div class="c ctr" style="left:782.50px;top:552px;width:59.95px;">-3.51%</div>
<div class="c ctr" style="left:842.45px;top:552px;width:59.95px;">-3.33%</div>
<div class="c ctr" style="left:902.40px;top:552px;width:59.95px;">-3.83%</div>
<div class="c l" style="left:962.35px;top:552px;width:25.15px;padding-left:2.2px">1.00%</div>
<div class="a" style="left:902.40px;top:188.70px;width:59.95px;height:11.95px;background:#2E72B8"></div>
<div class="c ctr hn" style="left:902.40px;top:188px;width:59.95px;">Count Goal</div>
<div class="a" style="left:902.40px;top:289.06px;width:59.95px;height:11.95px;background:#2E72B8"></div>
<div class="c ctr hn" style="left:902.40px;top:288px;width:59.95px;">Average</div>
<div class="c l lb" style="left:962.35px;top:288px;width:25.15px;padding-left:3px">Average</div>
<div class="a" style="left:902.40px;top:489.78px;width:59.95px;height:11.95px;background:#2E72B8"></div>
<div class="c ctr hn" style="left:902.40px;top:489px;width:59.95px;">Average</div>
<div class="c l lb" style="left:962.35px;top:489px;width:25.15px;padding-left:2.2px">Churn</div>
<div class="a" style="left:987.5px;top:50px;width:12.5px;height:510.2px;background:#F7F7F7"></div>
<div class="a" style="left:991.3px;top:62.3px;width:5.8px;height:366px;background:#6B6B6B;border-radius:3px"></div>
<svg class="a" style="left:988px;top:52px" width="12" height="10"><path d="M2.5 7.5 L5.8 3.2 L9.1 7.5Z" fill="#5a5a5a"/></svg>
<svg class="a" style="left:988px;top:552px" width="12" height="8"><path d="M2.5 2 L5.8 6.2 L9.1 2Z" fill="#5a5a5a"/></svg>
<div id="tabs" class="a">
<svg class="a" style="left:14px;top:5px" width="10" height="10"><path d="M6.5 1.5 L3 5 L6.5 8.5" stroke="#B8B8BC" stroke-width="1.1" fill="none"/></svg>
<svg class="a" style="left:34px;top:5px" width="10" height="10"><path d="M3.5 1.5 L7 5 L3.5 8.5" stroke="#555" stroke-width="1.1" fill="none"/></svg>
<div class="t" style="left:78.00px;top:6.48px;font-size:9.0px;color:#333;font-weight:normal;-webkit-text-stroke:0.08px #444">How To</div>
<div class="a" style="left:120px;top:2.3px;width:72px;height:15.8px;background:#F4F68F"></div>
<div class="t" style="left:127.00px;top:6.48px;font-size:9.0px;color:#333;font-weight:normal;-webkit-text-stroke:0.08px #444">2025 Accounts</div>
<div class="a" style="left:199px;top:-1px;width:99px;height:19px;background:#FDFDFD"></div>
<div class="t" style="left:202.80px;top:3.78px;font-size:9.0px;color:#141414;font-weight:normal;-webkit-text-stroke:0.3px #222">2025 MRR Dashboard</div>
<div class="a" style="left:202.8px;top:15.90px;width:90.5px;height:1.2px;background:#34584A"></div>
<div class="t" style="left:309.50px;top:6.48px;font-size:9.0px;color:#333;font-weight:normal;-webkit-text-stroke:0.08px #444">IS 2025</div>
<div class="t" style="left:355.50px;top:6.48px;font-size:9.0px;color:#333;font-weight:normal;-webkit-text-stroke:0.08px #444">CF 2025</div>
<div class="t" style="left:405.60px;top:6.48px;font-size:9.0px;color:#333;font-weight:normal;-webkit-text-stroke:0.08px #444">BS 2025</div>
<div class="t" style="left:455.80px;top:6.48px;font-size:9.0px;color:#333;font-weight:normal;-webkit-text-stroke:0.08px #444">Statements Summary 2025</div>
<div class="a" style="left:575.6px;top:2.3px;width:61.0px;height:15.8px;background:#F4F68F"></div>
<div class="t" style="left:582.50px;top:6.48px;font-size:9.0px;color:#333;font-weight:normal;-webkit-text-stroke:0.08px #444">CAPEX 2025</div>
<div class="a" style="left:641px;top:2.3px;width:73.60000000000002px;height:15.8px;background:#F4F68F"></div>
<div class="t" style="left:648.60px;top:6.48px;font-size:9.0px;color:#333;font-weight:normal;-webkit-text-stroke:0.08px #444">2026 Accounts</div>
<div class="t" style="left:726.00px;top:6.48px;font-size:9.0px;color:#333;font-weight:normal;-webkit-text-stroke:0.08px #444">2026 MRR Dashboard</div>
<div class="t" style="left:832.60px;top:6.48px;font-size:9.0px;color:#333;font-weight:normal;-webkit-text-stroke:0.08px #444">IS 2026</div>
<svg style="left:876px;top:6px" width="5" height="9"><path d="M3.5 1 Q1 4.5 3.5 8" fill="none" stroke="#666" stroke-width="1"/></svg>
<svg style="left:886px;top:9px" width="10" height="3"><circle cx="1.3" cy="1.2" r="0.9" fill="#444"/><circle cx="4.3" cy="1.2" r="0.9" fill="#444"/><circle cx="7.3" cy="1.2" r="0.9" fill="#444"/></svg>
<svg class="a" style="left:908px;top:6.5px" width="8" height="8"><path d="M4 0.3 V7.7 M0.3 4 H7.7" stroke="#444" stroke-width="1"/></svg>
<svg class="a" style="left:930px;top:4px" width="5" height="12"><circle cx="2.5" cy="2.5" r="0.9" fill="#555"/><circle cx="2.5" cy="6" r="0.9" fill="#555"/><circle cx="2.5" cy="9.5" r="0.9" fill="#555"/></svg>
<svg class="a" style="left:944px;top:6px" width="8" height="9"><path d="M6 1 L2 4.5 L6 8Z" fill="#555"/></svg>
<div class="a" style="left:954px;top:7.5px;width:20.7px;height:5.5px;background:#6e6e6e;border-radius:3px"></div>
<svg class="a" style="left:980px;top:6px" width="8" height="9"><path d="M2 1 L6 4.5 L2 8Z" fill="#555"/></svg>
</div>
<div id="status" class="a">
<div class="t" style="left:6.40px;top:4.78px;font-size:6.4px;color:#6a6a6a;font-weight:normal;">Ready</div>
<svg class="a" style="left:38px;top:3px" width="10" height="9"><rect x="0.5" y="0.5" width="9" height="8" fill="none" stroke="#666" stroke-width="1"/><path d="M0.5 3 H9.5 M0.5 6 H9.5 M3.5 0.5 V8.5 M6.5 0.5 V8.5" stroke="#777" stroke-width="0.8"/><rect x="5" y="5" width="3" height="2.5" fill="#333"/></svg>
<svg class="a" style="left:59px;top:2.5px" width="10" height="10"><path d="M5 1 L6.2 3.8 L9 4 L6.8 6 L7.5 9 L5 7.5 L2.5 9 L3.2 6 L1 4 L3.8 3.8Z" fill="none" stroke="#555" stroke-width="0.9"/></svg>
<div class="t" style="left:70.40px;top:4.57px;font-size:6.65px;color:#262626;font-weight:bold;">Accessibility: Investigate</div>
<div class="a" style="left:806px;top:1.5px;width:20px;height:10.5px;background:#DEDEDE"></div>
<svg class="a" style="left:815px;top:3.5px" width="10" height="9"><rect x="0.5" y="0.5" width="9" height="8" fill="none" stroke="#555" stroke-width="0.9"/><path d="M0.5 3.2 H9.5 M0.5 5.9 H9.5 M3.5 0.5 V8.5 M6.5 0.5 V8.5" stroke="#555" stroke-width="0.8"/></svg>
<svg class="a" style="left:840px;top:3.5px" width="10" height="9"><rect x="0.5" y="0.5" width="9" height="8" fill="none" stroke="#555" stroke-width="0.9"/><path d="M2.5 0.5 V8.5 M7.5 0.5 V8.5 M2.5 2.5 H7.5 M2.5 6.5 H7.5" stroke="#555" stroke-width="0.8"/></svg>
<svg class="a" style="left:867px;top:3.5px" width="10" height="9"><path d="M0.5 0.5 V8.5 H9.5 V0.5 M3 0.5 V4.5 H7 V0.5 M0.5 6 H9.5" fill="none" stroke="#555" stroke-width="0.9"/></svg>
<div class="a" style="left:888px;top:7.5px;width:5px;height:1px;background:#888"></div>
<div class="a" style="left:896px;top:7.5px;width:64px;height:1px;background:#888"></div>
<div class="a" style="left:928.5px;top:3.5px;width:3px;height:8.5px;background:#555"></div>
<svg class="a" style="left:963px;top:4px" width="7" height="7"><path d="M3.5 0.5 V6.5 M0.5 3.5 H6.5" stroke="#888" stroke-width="0.9"/></svg>
<div class="t" style="left:978.00px;top:4.44px;font-size:6.8px;color:#5a5a5a;font-weight:normal;">100%</div>
</div>
</body></html>
